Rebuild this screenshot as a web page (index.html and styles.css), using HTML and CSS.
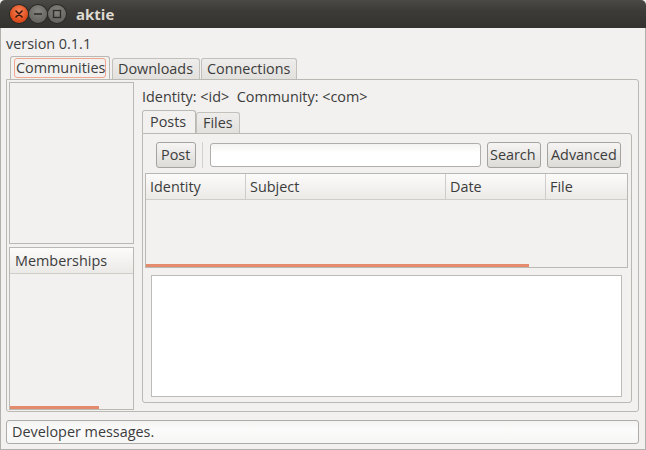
FILE: index.html
```html
<!DOCTYPE html>
<html>
<head>
<meta charset="utf-8">
<link rel="stylesheet" href="styles.css">
</head>
<body>
<div class="window">
  <div class="titlebar">
    <div class="wbtns">
      <span class="wbtn close"><svg width="18" height="18" viewBox="0 0 18 18"><path d="M6 6 L12 12 M12 6 L6 12" stroke="#3a1a0e" stroke-width="1.6" stroke-linecap="round"/></svg></span>
      <span class="wbtn grey"><svg width="18" height="18" viewBox="0 0 18 18"><path d="M5 9 H13" stroke="#2e2d2a" stroke-width="1.6"/></svg></span>
      <span class="wbtn grey"><svg width="18" height="18" viewBox="0 0 18 18"><rect x="5.5" y="5.5" width="7" height="7" fill="none" stroke="#2e2d2a" stroke-width="1.4"/></svg></span>
    </div>
    <div class="wtitle">aktie</div>
  </div>
  <div class="wbody">
    <div class="version">version 0.1.1</div>
    <div class="tabs">
      <div class="tab active t-comm"><span class="focus">Communities</span></div>
      <div class="tab t-down">Downloads</div>
      <div class="tab t-conn">Connections</div>
    </div>
    <div class="notebook">
      <div class="leftcol">
        <div class="frame commlist"></div>
        <div class="frame members">
          <div class="colhead">Memberships</div>
          <div class="members-body"><div class="scroll-orange sb-left"></div></div>
        </div>
      </div>
      <div class="rightcol">
        <div class="idline">Identity: &lt;id&gt;&nbsp; Community: &lt;com&gt;</div>
        <div class="itabs">
          <div class="itab active">Posts</div>
          <div class="itab">Files</div>
        </div>
        <div class="ipanel">
          <div class="toolbar">
            <div class="btn b-post">Post</div>
            <div class="sep"></div>
            <div class="entry"></div>
            <div class="btn b-search">Search</div>
            <div class="btn b-adv">Advanced</div>
          </div>
          <div class="tree">
            <div class="thead">
              <div class="th c1">Identity</div>
              <div class="th c2">Subject</div>
              <div class="th c3">Date</div>
              <div class="th c4">File</div>
            </div>
            <div class="tbody"><div class="scroll-orange sb-tree"></div></div>
          </div>
          <div class="textview"></div>
        </div>
      </div>
    </div>
    <div class="status">Developer messages.</div>
  </div>
</div>
</body>
</html>
```

FILE: styles.css
```css
* { box-sizing: border-box; }
html, body { margin: 0; padding: 0; }
body {
  width: 646px; height: 450px; overflow: hidden;
  font-family: "Open Sans", "DejaVu Sans", sans-serif;
  font-size: 14.4px; color: #3c3c3c;
  background: #f2f1f0;
}
.window { display: flex; flex-direction: column; height: 450px; }
.titlebar {
  height: 28px; flex: none;
  background: linear-gradient(#4a4945, #3c3b37 40%, #33322e);
  border-radius: 5px 5px 0 0;
  display: flex; align-items: center;
}
.wbtns { display: flex; gap: 1px; margin-left: 10px; width: 64px; }
.wbtn {
  width: 18px; height: 18px; border-radius: 50%;
  display: flex; align-items: center; justify-content: center;
}
.wbtn.close { background: radial-gradient(circle at 50% 35%, #f6845a, #e0501f 60%, #c8401a); box-shadow: 0 0 0 1px #2a2925; }
.wbtn.grey { background: radial-gradient(circle at 50% 35%, #86857f, #6b6a65 60%, #5c5b56); box-shadow: 0 0 0 1px #2a2925; }
.wtitle { color: #dfdbd2; font-weight: bold; font-size: 15px; margin-left: 2px; }
.wbody {
  flex: 1; display: flex; flex-direction: column;
  border: 1px solid #b2b0ab; border-top: none;
  padding: 0 6px 5px 5px;
}
.version { height: 28px; padding-top: 6px; line-height: 20px; }
.tabs { height: 23px; display: flex; align-items: flex-end; padding-left: 4px; gap: 2px; }
.tab {
  height: 21px; line-height: 20px; padding-left: 5px;
  border: 1px solid #c2c0bb; border-bottom: none; border-radius: 3px 3px 0 0;
  background: linear-gradient(#eeedeb, #e3e1de);
  white-space: nowrap;
}
.tab.active { height: 23px; background: #f2f1f0; border-color: #bab8b3; padding: 1px 3px 0 3px; }
.t-comm { width: 100px; }
.t-down { width: 88px; }
.t-conn { width: 96px; margin-left: -1px; }
.focus {
  display: block; height: 20px; line-height: 18px; padding: 0 1px;
  border: 1px solid #f0a68c; border-radius: 3px;
}
.notebook {
  height: 333px; display: flex;
  border: 1px solid #bab8b3; border-radius: 0 3px 3px 3px;
  padding: 2px 0 1px 2px;
}
.leftcol { width: 125px; display: flex; flex-direction: column; gap: 3px; }
.frame { border: 1px solid #bab8b3; background: #f2f1f0; }
.commlist { height: 162px; }
.members { flex: 1; display: flex; flex-direction: column; }
.colhead {
  height: 26px; line-height: 25px; padding-left: 5px;
  background: linear-gradient(#fbfbfa, #eceae7);
  border-bottom: 1px solid #cfcdc9;
}
.members-body { flex: 1; position: relative; }
.scroll-orange { position: absolute; height: 3px; background: #e38b6c; }
.sb-left { left: 0; bottom: 0; width: 89px; }
.rightcol { flex: 1; display: flex; flex-direction: column; padding: 5px 6px 7px 8px; }
.idline { height: 23px; line-height: 20px; }
.itabs { height: 23px; display: flex; align-items: flex-end; }
.itab {
  height: 21px; line-height: 20px; padding: 0 6px 0 6px;
  border: 1px solid #c2c0bb; border-bottom: none; border-radius: 3px 3px 0 0;
  background: linear-gradient(#eeedeb, #e3e1de);
}
.itab.active { height: 23px; width: 54px; line-height: 22px; padding-left: 7px; background: #f2f1f0; border-color: #bab8b3; }
.ipanel {
  flex: 1; display: flex; flex-direction: column;
  border: 1px solid #bab8b3; border-radius: 0 3px 3px 3px;
  padding: 0 3px 0 2px;
}
.toolbar { height: 39px; display: flex; align-items: center; padding: 3px 0 0 11px; }
.btn {
  height: 26px; line-height: 23px; padding: 0 4px;
  border: 1px solid #a5a39f; border-radius: 3px;
  background: linear-gradient(#f6f5f4, #dddbd7);
  white-space: nowrap;
}
.b-post { width: 40px; }
.sep { width: 1px; height: 26px; background: #d3d1cd; margin: 0 7px 0 6px; }
.entry {
  width: 271px; height: 24px; border: 1px solid #b0aeaa; border-radius: 3px;
  background: linear-gradient(#f4f4f3, #ffffff 40%);
}
.b-search { width: 54px; margin-left: 6px; padding: 0 2px; }
.b-adv { width: 74px; margin-left: 6px; padding: 0 3px; }
.tree { height: 95px; border: 1px solid #bab8b3; display: flex; flex-direction: column; }
.thead {
  height: 26px; display: flex;
  background: linear-gradient(#fbfbfa, #eceae7);
  border-bottom: 1px solid #cfcdc9;
}
.th { line-height: 25px; padding-left: 4px; border-right: 1px solid #cfcdc9; }
.c1 { width: 100px; }
.c2 { width: 200px; }
.c3 { width: 100px; }
.c4 { flex: 1; border-right: none; }
.tbody { flex: 1; position: relative; }
.sb-tree { left: 0; bottom: 0; width: 383px; }
.textview {
  height: 122px; margin: 7px 6px 0 6px;
  background: #ffffff; border: 1px solid #bdbbb7;
}
.status {
  margin-top: 8px; height: 24px; line-height: 22px; padding-left: 5px;
  border: 1px solid #aeaca8; border-radius: 3px;
  background: linear-gradient(#f3f3f2, #fbfbfb 40%, #f6f6f5);
}
```
